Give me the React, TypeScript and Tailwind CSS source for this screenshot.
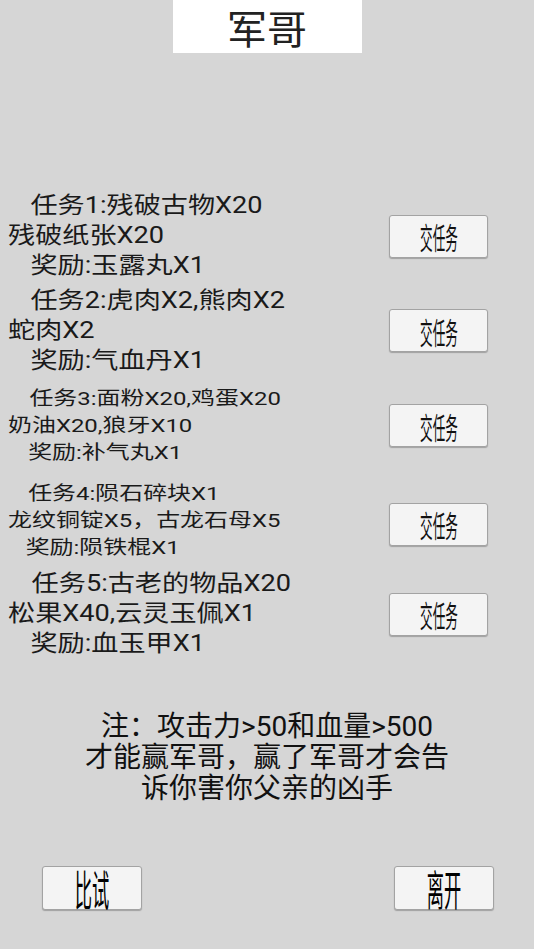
import React from "react";

function TaskButton({ extra }: { extra: string }) {
  return (
    <div className={`w-[99px] h-[43px] rounded-[3px] border border-[#a3a3a3] bg-[#f4f4f4] shadow-[0_1px_1px_rgba(0,0,0,0.25)] flex items-center justify-center ${extra}`}>
      <span className="font-['Noto_Sans_CJK_SC',sans-serif] text-[30px] leading-[34px] text-[#111] scale-x-[0.42] whitespace-nowrap">
        交任务
      </span>
    </div>
  );
}

function BigButton({ label }: { label: string }) {
  return (
    <div className="w-[100px] h-[44px] rounded-[3px] border border-[#a3a3a3] bg-[#f4f4f4] shadow-[0_1px_1px_rgba(0,0,0,0.25)] flex items-center justify-center">
      <span className="font-['Noto_Sans_CJK_SC',sans-serif] text-[42px] leading-[44px] text-black scale-x-[0.41] whitespace-nowrap">
        {label}
      </span>
    </div>
  );
}

type Task = { l1: string; l2: string; l3: string; big: boolean; row: string; i1: string; i3: string; btn: string };

const tasks: Task[] = [
  { l1: "任务1:残破古物X20", l2: "残破纸张X20", l3: "奖励:玉露丸X1", big: true, row: "h-[94px]", i1: "pl-[19px]", i3: "pl-[19px]", btn: "" },
  { l1: "任务2:虎肉X2,熊肉X2", l2: "蛇肉X2", l3: "奖励:气血丹X1", big: true, row: "h-[95px]", i1: "pl-[19px]", i3: "pl-[19px]", btn: "" },
  { l1: "任务3:面粉X20,鸡蛋X20", l2: "奶油X20,狼牙X10", l3: "奖励:补气丸X1", big: false, row: "h-[95px]", i1: "pl-[17px]", i3: "pl-[16px]", btn: "" },
  { l1: "任务4:陨石碎块X1", l2: "龙纹铜锭X5，古龙石母X5", l3: "奖励:陨铁棍X1", big: false, row: "h-[94px]", i1: "pl-[16px]", i3: "pl-[14px]", btn: "mt-[8px]" },
  { l1: "任务5:古老的物品X20", l2: "松果X40,云灵玉佩X1", l3: "奖励:血玉甲X1", big: true, row: "h-[94px]", i1: "pl-[20px]", i3: "pl-[19px]", btn: "" },
];

export default function App() {
  return (
    <div className="w-[534px] h-[949px] bg-[#d6d6d6] flex flex-col text-[#1a1a1a] overflow-hidden font-['Roboto','Noto_Sans_CJK_SC',sans-serif]">
      <div className="flex justify-center">
        <div className="w-[189px] h-[53px] bg-white flex items-center justify-center">
          <span className="font-['Noto_Sans_CJK_SC',sans-serif] text-[40px] leading-[50px] text-[#222]">军哥</span>
        </div>
      </div>

      <div className="mt-[136px] flex flex-col">
        {tasks.map((t, i) => (
          <div key={i} className={`flex items-center justify-between pl-[8px] pr-[46px] ${t.row}`}>
            <div
              className={
                t.big
                  ? "text-[23px] leading-[30px] origin-left scale-x-[1.18] whitespace-nowrap"
                  : "text-[19px] leading-[27px] origin-left scale-x-[1.26] whitespace-nowrap"
              }
            >
              <div className={t.i1}>{t.l1}</div>
              <div>{t.l2}</div>
              <div className={t.i3}>{t.l3}</div>
            </div>
            <TaskButton extra={t.btn} />
          </div>
        ))}
      </div>

      <div className="mt-[50px] flex flex-col items-center text-[28px] leading-[31px] text-[#111]">
        <div>注：攻击力&gt;50和血量&gt;500</div>
        <div>才能赢军哥，赢了军哥才会告</div>
        <div>诉你害你父亲的凶手</div>
      </div>

      <div className="mt-[62px] flex justify-between pl-[42px] pr-[40px]">
        <BigButton label="比试" />
        <BigButton label="离开" />
      </div>
    </div>
  );
}
